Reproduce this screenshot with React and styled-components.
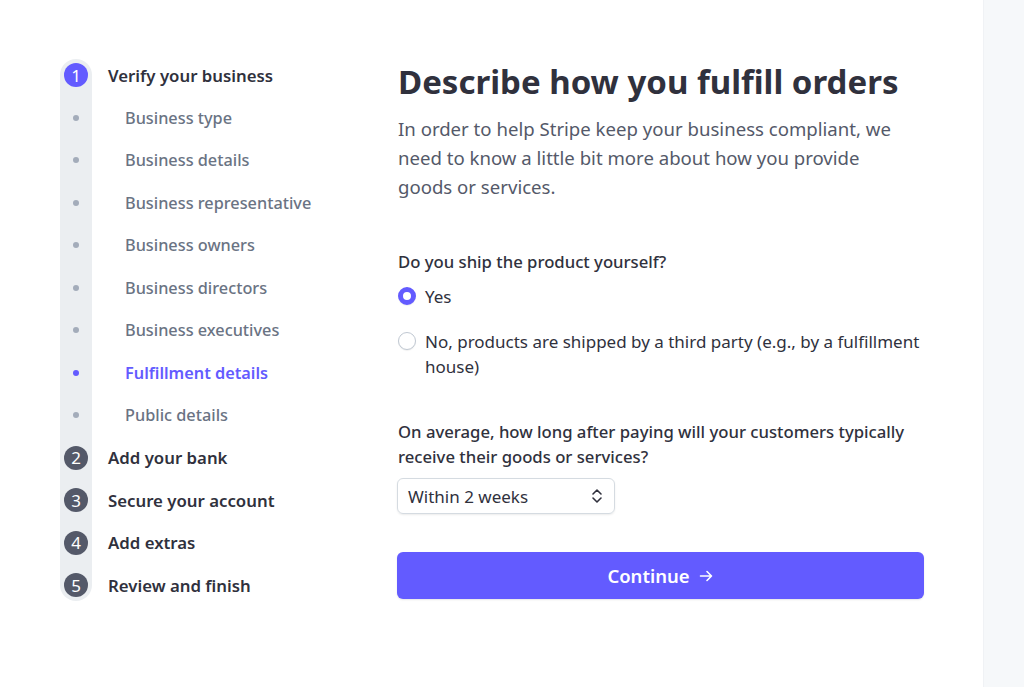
import React, { useState } from "react";
import styled, { createGlobalStyle } from "styled-components";

const GlobalStyle = createGlobalStyle`
  html, body {
    margin: 0;
    padding: 0;
    background: #ffffff;
    font-family: "Noto Sans", "Open Sans", Arial, sans-serif;
    -webkit-font-smoothing: antialiased;
  }
  * { box-sizing: border-box; }
`;

const steps = [
  {
    num: 1,
    label: "Verify your business",
    active: true,
    subs: [
      "Business type",
      "Business details",
      "Business representative",
      "Business owners",
      "Business directors",
      "Business executives",
      "Fulfillment details",
      "Public details",
    ],
    current: "Fulfillment details",
  },
  { num: 2, label: "Add your bank" },
  { num: 3, label: "Secure your account" },
  { num: 4, label: "Add extras" },
  { num: 5, label: "Review and finish" },
];

export default function App() {
  const [ship, setShip] = useState("yes");

  const rows = [];
  steps.forEach((s) => {
    rows.push({ type: "step", ...s });
    (s.subs || []).forEach((sub) =>
      rows.push({ type: "sub", label: sub, current: sub === s.current })
    );
  });

  return (
    <>
      <GlobalStyle />
      <Page>
        <Main>
          <Sidebar>
            {rows.map((r, i) => (
              <Row key={i}>
                <Marker
                  edge={i === 0 ? "first" : i === rows.length - 1 ? "last" : ""}
                >
                  {r.type === "step" ? (
                    <StepCircle active={r.active}>{r.num}</StepCircle>
                  ) : (
                    <Dot current={r.current} />
                  )}
                </Marker>
                {r.type === "step" ? (
                  <StepLabel>{r.label}</StepLabel>
                ) : (
                  <SubLabel current={r.current}>{r.label}</SubLabel>
                )}
              </Row>
            ))}
          </Sidebar>

          <Content>
            <Title>Describe how you fulfill orders</Title>
            <Lead>
              In order to help Stripe keep your business compliant, we need to
              know a little bit more about how you provide goods or services.
            </Lead>

            <Question>Do you ship the product yourself?</Question>
            <Options>
              <Option onClick={() => setShip("yes")}>
                <Radio checked={ship === "yes"} />
                <OptionText>Yes</OptionText>
              </Option>
              <Option onClick={() => setShip("no")}>
                <Radio checked={ship === "no"} />
                <OptionText>
                  No, products are shipped by a third party (e.g., by a
                  fulfillment house)
                </OptionText>
              </Option>
            </Options>

            <Question second>
              On average, how long after paying will your customers typically
              receive their goods or services?
            </Question>
            <Select>
              <span>Within 2 weeks</span>
              <svg width="14" height="16" viewBox="0 0 14 16" fill="none">
                <path
                  d="M3 6l4-4 4 4M3 10l4 4 4-4"
                  stroke="#30313d"
                  strokeWidth="1.6"
                  strokeLinecap="round"
                  strokeLinejoin="round"
                />
              </svg>
            </Select>

            <ContinueButton>
              Continue
              <svg width="16" height="16" viewBox="0 0 16 16" fill="none">
                <path
                  d="M2.5 8h10.5M9 3.5L13.5 8 9 12.5"
                  stroke="#ffffff"
                  strokeWidth="1.6"
                  strokeLinecap="round"
                  strokeLinejoin="round"
                />
              </svg>
            </ContinueButton>
          </Content>
        </Main>
        <SideStrip />
      </Page>
    </>
  );
}

const Page = styled.div`
  display: flex;
  width: 100%;
  min-height: 687px;
`;

const Main = styled.div`
  flex: 1;
  display: flex;
  padding: 54px 0 0 60px;
`;

const SideStrip = styled.div`
  width: 41px;
  background: #f6f8fa;
  border-left: 1px solid #f0f2f5;
`;

const Sidebar = styled.div`
  width: 337px;
  display: flex;
  flex-direction: column;
`;

const Row = styled.div`
  display: flex;
  align-items: center;
  height: 42.5px;
`;

const Marker = styled.div`
  width: 32px;
  height: ${({ edge }) => (edge ? "37.25px" : "100%")};
  align-self: ${({ edge }) =>
    edge === "first" ? "flex-end" : edge === "last" ? "flex-start" : "stretch"};
  display: flex;
  align-items: ${({ edge }) =>
    edge === "first" ? "flex-start" : edge === "last" ? "flex-end" : "center"};
  padding: 4px 0;
  justify-content: center;
  background: #ebeef1;
  border-radius: ${({ edge }) =>
    edge === "first" ? "16px 16px 0 0" : edge === "last" ? "0 0 16px 16px" : "0"};
`;

const StepCircle = styled.div`
  width: 24px;
  height: 24px;
  border-radius: 50%;
  background: ${({ active }) => (active ? "#635bff" : "#545969")};
  color: #ffffff;
  font-size: 17px;
  display: flex;
  align-items: center;
  justify-content: center;
  line-height: 1;
`;

const Dot = styled.div`
  width: 6px;
  height: 6px;
  border-radius: 50%;
  background: ${({ current }) => (current ? "#635bff" : "#a3acba")};
`;

const StepLabel = styled.div`
  margin-left: 16px;
  font-size: 16.8px;
  font-weight: 600;
  color: #30313d;
`;

const SubLabel = styled.div`
  margin-left: 33px;
  font-size: 16.3px;
  font-weight: ${({ current }) => (current ? 600 : 500)};
  color: ${({ current }) => (current ? "#635bff" : "#6a7383")};
`;

const Content = styled.div`
  width: 527px;
  display: flex;
  flex-direction: column;
  padding-top: 8px;
`;

const Title = styled.h1`
  margin: 0 0 0 1px;
  font-size: 33px;
  line-height: 40px;
  font-weight: 700;
  color: #30313d;
`;

const Lead = styled.p`
  margin: 12px 0 0 1px;
  font-size: 18.6px;
  line-height: 29px;
  color: #545969;
  padding-right: 20px;
`;

const Question = styled.div`
  margin: ${({ second }) => (second ? "40px 0 9px 1px" : "48px 0 10px 1px")};
  font-size: 16.7px;
  line-height: 25px;
  font-weight: 500;
  color: #30313d;
`;

const Options = styled.div`
  display: flex;
  flex-direction: column;
  gap: 20px;
`;

const Option = styled.label`
  display: flex;
  align-items: flex-start;
  gap: 9px;
  cursor: pointer;
`;

const Radio = styled.span`
  flex: none;
  width: 18px;
  height: 18px;
  margin-top: 3px;
  margin-left: 1px;
  border-radius: 50%;
  background: #ffffff;
  border: ${({ checked }) => (checked ? "5.5px solid #635bff" : "1px solid #c0c8d2")};
  box-shadow: 0 1px 1px rgba(0, 0, 0, 0.06);
`;

const OptionText = styled.span`
  font-size: 17px;
  line-height: 25px;
  color: #30313d;
`;

const Select = styled.div`
  width: 218px;
  height: 36px;
  display: flex;
  align-items: center;
  justify-content: space-between;
  padding: 0 10px;
  border-radius: 6px;
  border: 1px solid #d5dbe1;
  box-shadow: 0 1px 2px rgba(0, 0, 0, 0.08);
  font-size: 17px;
  color: #30313d;
`;

const ContinueButton = styled.button`
  margin-top: 38px;
  width: 527px;
  height: 47px;
  border: none;
  border-radius: 6px;
  background: #635bff;
  color: #ffffff;
  font-family: inherit;
  font-size: 18.5px;
  font-weight: 600;
  display: flex;
  align-items: center;
  justify-content: center;
  gap: 8px;
  box-shadow: 0 1px 2px rgba(0, 0, 0, 0.1);
  cursor: pointer;
`;
